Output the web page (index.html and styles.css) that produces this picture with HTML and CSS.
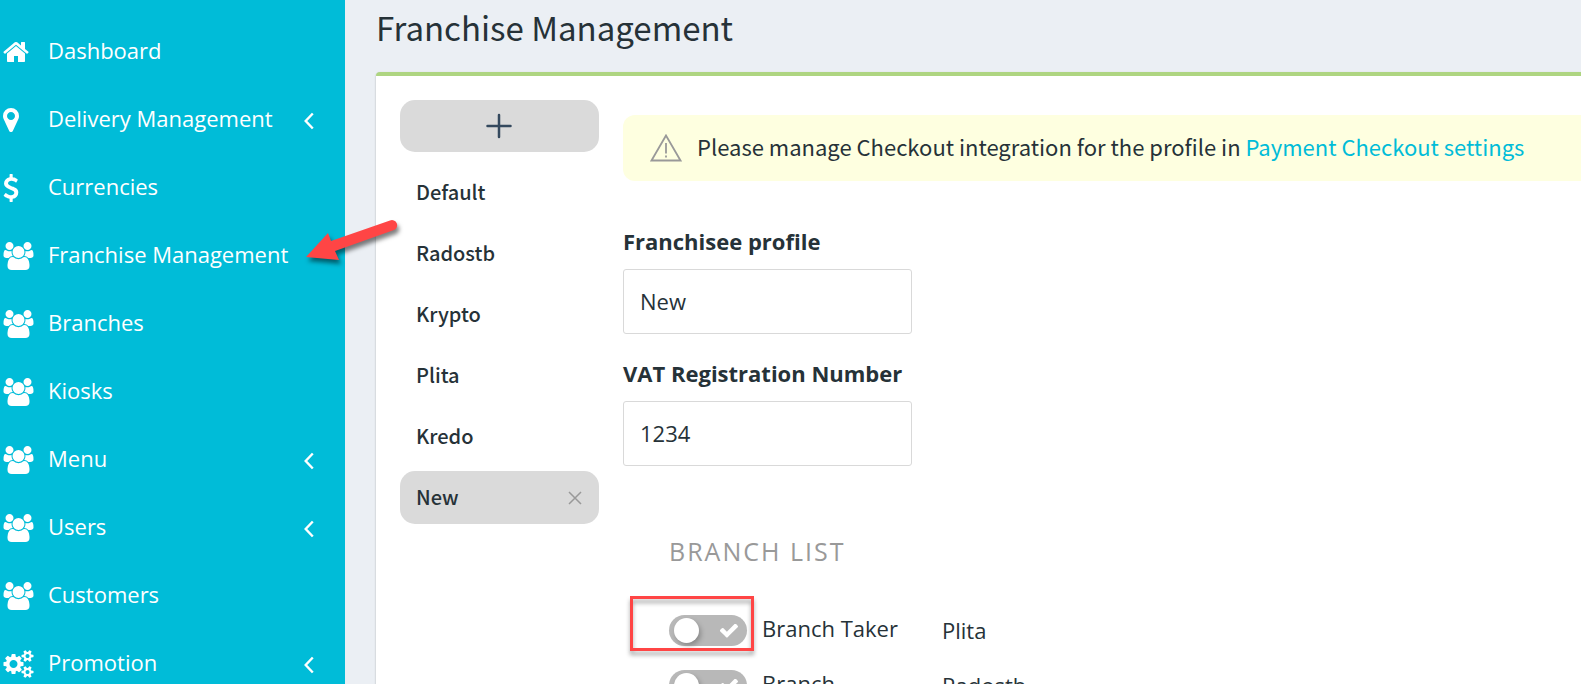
FILE: index.html
```html
<!DOCTYPE html>
<html lang="en">
<head>
    <meta charset="UTF-8">
    <meta name="viewport" content="width=device-width, initial-scale=1.0">
    <title>Franchise Management</title>
    <link rel="stylesheet" href="styles.css">
</head>
<body>
    <!-- shared icons -->
    <svg class="sprite" aria-hidden="true">
        <symbol id="home" viewBox="64 0 1664 1792" preserveAspectRatio="xMinYMid"><path d="M1472 992v480q0 26-19 45t-45 19h-384v-384h-256v384h-384q-26 0-45-19t-19-45v-480q0-1 .5-3t.5-3l575-474 575 474q1 2 1 6zm223-69l-62 74q-8 9-21 11h-3q-13 0-21-7l-692-577-692 577q-12 8-24 7-13-2-21-11l-62-74q-8-10-7-23.5t11-21.5l719-599q32-26 76-26t76 26l244 204v-195q0-14 9-23t23-9h192q14 0 23 9t9 23v408l219 182q10 8 11 21.5t-7 23.5z"/></symbol>
        <symbol id="marker" viewBox="384 0 1024 1792" preserveAspectRatio="xMinYMid"><path d="M1152 640q0-106-75-181t-181-75-181 75-75 181 75 181 181 75 181-75 75-181zm256 0q0 109-33 179l-364 774q-16 33-47.5 52t-67.5 19-67.5-19-46.5-52l-365-774q-33-70-33-179 0-212 150-362t362-150 362 150 150 362z"/></symbol>
        <symbol id="dollar" viewBox="384 0 1024 1792" preserveAspectRatio="xMinYMid"><path d="M1362 1185q0 153-99.5 263.5t-258.5 136.5v175q0 14-9 23t-23 9h-135q-13 0-22.5-9.5t-9.5-22.5v-175q-66-9-127.5-31t-101.5-44.5-74-48-46.5-37.5-17.5-18q-17-21-2-41l103-135q7-10 23-12 15-2 24 9l2 2q113 99 243 125 37 8 74 8 81 0 142.5-43t61.5-122q0-28-15-53t-33.5-42-58.5-37.5-66-32-80-32.5q-39-16-61.5-25t-61.5-26.5-62.5-31-56.5-35.5-53.5-42.5-43.5-49-35.5-58-21-66.5-8.5-78q0-138 98-242t255-134v-180q0-13 9.5-22.5t22.5-9.5h135q14 0 23 9t9 23v176q57 6 110.5 23t87 33.5 63.5 37.5 39 29 15 14q17 18 5 38l-81 146q-8 15-23 16-14 3-27-7-3-3-14.5-12t-39-26.5-58.5-32-74.5-26-85.5-11.5q-95 0-155 43t-60 111q0 26 8.5 48t29.5 41.5 39.5 33 56 31 60.5 27 70 27.5q53 20 81 31.5t76 35 75.5 42.5 62 50 53 63.5 31.5 76.5 13 94z"/></symbol>
        <symbol id="users" viewBox="0 0 1920 1792"><path d="M593 896q-162 5-265 128h-134q-82 0-138-40.5t-56-118.5q0-353 124-353 6 0 43.5 21t97.5 42.5 119 21.5q67 0 133-23-5 37-5 66 0 139 81 256zm1071 637q0 120-73 189.5t-194 69.5h-874q-121 0-194-69.5t-73-189.5q0-53 3.5-103.5t14-109 26.5-108.5 43-97.5 62-81 85.5-53.5 111.5-20q10 0 43 21.5t73 48 107 48 135 21.5 135-21.5 107-48 73-48 43-21.5q61 0 111.5 20t85.5 53.5 62 81 43 97.5 26.5 108.5 14 109 3.5 103.5zm-1024-1277q0 106-75 181t-181 75-181-75-75-181 75-181 181-75 181 75 75 181zm704 384q0 159-112.5 271.5t-271.5 112.5-271.5-112.5-112.5-271.5 112.5-271.5 271.5-112.5 271.5 112.5 112.5 271.5zm576 225q0 78-56 118.5t-138 40.5h-134q-103-123-265-128 81-117 81-256 0-29-5-66 66 23 133 23 59 0 119-21.5t97.5-42.5 43.5-21q124 0 124 353zm-128-609q0 106-75 181t-181 75-181-75-75-181 75-181 181-75 181 75 75 181z"/></symbol>
        <symbol id="cogs" viewBox="0 0 1920 1792"><path d="M896 896q0-106-75-181t-181-75-181 75-75 181 75 181 181 75 181-75 75-181zm768 512q0-52-38-90t-90-38-90 38-38 90q0 53 37.5 90.5t90.5 37.5 90.5-37.5 37.5-90.5zm0-1024q0-52-38-90t-90-38-90 38-38 90q0 53 37.5 90.5t90.5 37.5 90.5-37.5 37.5-90.5zm-384 421v185q0 10-7 19.5t-16 10.5l-155 24q-11 35-32 76 34 48 90 115 7 11 7 20 0 12-7 19-23 30-82.5 89.5t-78.5 59.5q-11 0-21-7l-115-90q-37 19-77 31-11 108-23 155-7 24-30 24h-186q-11 0-20-7.5t-10-17.5l-23-153q-34-10-75-31l-118 89q-7 7-20 7-11 0-21-8-144-133-144-160 0-9 7-19 10-14 41-53t47-61q-23-44-35-82l-152-24q-10-1-17-9.5t-7-19.5v-185q0-10 7-19.5t16-10.5l155-24q11-35 32-76-34-48-90-115-7-11-7-20 0-12 7-20 22-30 82-89t79-59q11 0 21 7l115 90q34-18 77-32 11-108 23-154 7-24 30-24h186q11 0 20 7.5t10 17.5l23 153q34 10 75 31l118-89q8-7 20-7 11 0 21 8 144 133 144 160 0 8-7 19-12 16-42 54t-45 60q23 48 34 82l152 23q10 2 17 10.5t7 19.5zm640 533v140q0 16-149 31-12 27-30 52 51 113 51 138 0 4-4 7-122 71-124 71-8 0-46-47t-52-68q-20 2-30 2t-30-2q-14 21-52 68t-46 47q-2 0-124-71-4-3-4-7 0-25 51-138-18-25-30-52-149-15-149-31v-140q0-16 149-31 13-29 30-52-51-113-51-138 0-4 4-7 4-2 35-20t59-34 30-16q8 0 46 46.5t52 67.5q20-2 30-2t30 2q51-71 92-112l6-2q4 0 124 70 4 3 4 7 0 25-51 138 17 23 30 52 149 15 149 31zm0-1024v140q0 16-149 31-12 27-30 52 51 113 51 138 0 4-4 7-122 71-124 71-8 0-46-47t-52-68q-20 2-30 2t-30-2q-14 21-52 68t-46 47q-2 0-124-71-4-3-4-7 0-25 51-138-18-25-30-52-149-15-149-31v-140q0-16 149-31 13-29 30-52-51-113-51-138 0-4 4-7 4-2 35-20t59-34 30-16q8 0 46 46.5t52 67.5q20-2 30-2t30 2q51-71 92-112l6-2q4 0 124 70 4 3 4 7 0 25-51 138 17 23 30 52 149 15 149 31z"/></symbol>
        <symbol id="angle" viewBox="0 0 10 18"><path d="M8.800 1.500L1.700 9l7.100 7.500" fill="none" stroke="currentColor" stroke-width="2.400"/></symbol>
        <symbol id="check" viewBox="121 366 1550 1188"><path d="M1671 566q0 40-28 68l-724 724-136 136q-28 28-68 28t-68-28l-136-136-362-362q-28-28-28-68t28-68l136-136q28-28 68-28t68 28l294 295 656-657q28-28 68-28t68 28l136 136q28 28 28 68z"/></symbol>
    </svg>

    <div class="layout">
        <nav class="sidebar">
            <a href="#" class="nav-item"><svg class="nav-icon"><use href="#home"/></svg><span>Dashboard</span></a>
            <a href="#" class="nav-item"><svg class="nav-icon"><use href="#marker"/></svg><span>Delivery Management</span><svg class="nav-angle"><use href="#angle"/></svg></a>
            <a href="#" class="nav-item"><svg class="nav-icon"><use href="#dollar"/></svg><span>Currencies</span></a>
            <a href="#" class="nav-item"><svg class="nav-icon"><use href="#users"/></svg><span>Franchise Management</span></a>
            <a href="#" class="nav-item"><svg class="nav-icon"><use href="#users"/></svg><span>Branches</span></a>
            <a href="#" class="nav-item"><svg class="nav-icon"><use href="#users"/></svg><span>Kiosks</span></a>
            <a href="#" class="nav-item"><svg class="nav-icon"><use href="#users"/></svg><span>Menu</span><svg class="nav-angle"><use href="#angle"/></svg></a>
            <a href="#" class="nav-item"><svg class="nav-icon"><use href="#users"/></svg><span>Users</span><svg class="nav-angle"><use href="#angle"/></svg></a>
            <a href="#" class="nav-item"><svg class="nav-icon"><use href="#users"/></svg><span>Customers</span></a>
            <a href="#" class="nav-item"><svg class="nav-icon"><use href="#cogs"/></svg><span>Promotion</span><svg class="nav-angle"><use href="#angle"/></svg></a>
        </nav>

        <main class="main">
            <h1>Franchise Management</h1>

            <div class="panel">
                <div class="profiles">
                    <button type="button" class="add-button" aria-label="Add profile">
                        <svg width="26" height="26" viewBox="0 0 26 26"><path d="M13 2v22M1.500 13h23" stroke="#34495e" stroke-width="2.500" stroke-linecap="round"/></svg>
                    </button>
                    <button type="button" class="profile">Default</button>
                    <button type="button" class="profile">Radostb</button>
                    <button type="button" class="profile">Krypto</button>
                    <button type="button" class="profile">Plita</button>
                    <button type="button" class="profile">Kredo</button>
                    <button type="button" class="profile active">New
                        <svg width="14" height="14" viewBox="0 0 14 14"><path d="M1 1l12 12M13 1L1 13" stroke="#999" stroke-width="1.500"/></svg>
                    </button>
                </div>

                <div class="content">
                    <div class="notice">
                        <svg width="32" height="28" viewBox="0 0 32 28"><path d="M16 1.500L1.500 26.500h29z" fill="none" stroke="#999" stroke-width="1.800"/><path d="M16 9v10.500M16 21.500v2" stroke="#999" stroke-width="1.800"/></svg>
                        <span>Please manage Checkout integration for the profile in <a href="#">Payment Checkout settings</a></span>
                    </div>

                    <form>
                        <div class="form-group">
                            <label for="profile">Franchisee profile</label>
                            <input type="text" id="profile" value="New">
                        </div>
                        <div class="form-group">
                            <label for="vat">VAT Registration Number</label>
                            <input type="text" id="vat" value="1234">
                        </div>

                        <div class="branches">
                            <h2>BRANCH LIST</h2>
                            <div class="branch">
                                <div class="switch">
                                    <input type="checkbox" id="branch1">
                                    <svg><use href="#check"/></svg>
                                    <div class="highlight"></div>
                                </div>
                                <label for="branch1">Branch Taker</label>
                                <span class="owner">Plita</span>
                            </div>
                            <div class="branch">
                                <div class="switch">
                                    <input type="checkbox" id="branch2">
                                    <svg><use href="#check"/></svg>
                                </div>
                                <label for="branch2">Branch</label>
                                <span class="owner">Radostb</span>
                            </div>
                        </div>
                    </form>
                </div>
            </div>
        </main>

        <svg class="arrow" width="110" height="64" viewBox="0 0 110 64">
            <path d="M6 47L28 23l3 8L90 10.500a5 5 0 0 1 4 9.500L35 41l4 9z" fill="#ff4545"/>
        </svg>
    </div>
</body>
</html>
```
FILE: styles.css
```css
* {
    box-sizing: border-box;
}

body {
    margin: 0;
    font-family: "Open Sans", sans-serif;
    font-size: 22px;
    color: #263238;
    background-color: #ebeff4;
}

.sprite {
    display: none;
}

.layout {
    position: relative;
    display: flex;
    height: 100vh;
    overflow: hidden;
}

/* sidebar */
.sidebar {
    flex: 0 0 345px;
    padding: 16px 31px 0 3px;
    background-color: #00bcd8;
}

.nav-item {
    display: flex;
    align-items: center;
    height: 68px;
    color: white;
    text-decoration: none;
}

.nav-item span {
    padding-bottom: 1px;
}

.nav-icon {
    width: 31px;
    height: 28px;
    margin: 3px 14px 0 0;
    fill: white;
}

.nav-angle {
    width: 10px;
    height: 18px;
    margin: 5px 0 0 auto;
}

/* page */
.main {
    flex: 1;
    min-width: 0;
    padding-left: 31px;
}

h1 {
    margin: 0;
    height: 72px;
    font-family: "Noto Sans CJK SC", sans-serif;
    font-size: 33px;
    font-weight: 400;
    line-height: 54px;
}

.panel {
    display: flex;
    gap: 24px;
    min-height: 100%;
    padding: 24px 0 24px 24px;
    background-color: white;
    border-top: 4px solid #aed581;
    border-radius: 4px 0 0 0;
    box-shadow: 0 1px 2px rgba(0, 0, 0, 0.3);
}

.profiles {
    flex: 0 0 199px;
}

.add-button,
.profile {
    display: flex;
    align-items: center;
    width: 100%;
    height: 53px;
    margin-bottom: 8px;
    padding: 0 17px 2px 16px;
    border: none;
    border-radius: 15px;
    background-color: white;
    color: #263238;
    font-family: "Noto Sans CJK SC", sans-serif;
    font-size: 20px;
    font-weight: 500;
    cursor: pointer;
}

.add-button {
    justify-content: center;
    height: 52px;
    margin-bottom: 14px;
    padding-bottom: 0;
    background-color: #dadada;
}

.profile.active {
    justify-content: space-between;
    background-color: #dadada;
}

.profile.active svg {
    margin-top: 2px;
}

.content {
    flex: 1;
    min-width: 0;
    padding-top: 15px;
}

.notice {
    display: flex;
    align-items: center;
    gap: 15px;
    height: 66px;
    margin-bottom: 44px;
    padding-left: 27px;
    background-color: #feffe0;
    border-radius: 12px 0 0 12px;
    font-family: "Noto Sans CJK SC", sans-serif;
    white-space: nowrap;
}

.notice span {
    padding-bottom: 4px;
}

.notice a {
    color: #00bcd8;
    text-decoration: none;
}

.form-group {
    width: 289px;
    margin-bottom: 23px;
}

.form-group label {
    display: block;
    margin-bottom: 12px;
    font-weight: bold;
    line-height: 32px;
    white-space: nowrap;
}

.form-group input {
    width: 100%;
    height: 65px;
    padding: 0 16px 2px;
    border: 1px solid #d9d9d9;
    border-radius: 3px;
    color: #263238;
    font-family: "Open Sans", sans-serif;
    font-size: 22px;
}

/* branches */
.branches {
    padding: 44px 0 0 46px;
}

h2 {
    margin: 0 0 34px;
    color: #999;
    font-size: 25px;
    font-weight: 400;
    letter-spacing: 2px;
    line-height: 36px;
}

.branch {
    display: flex;
    align-items: center;
    height: 55px;
}

.branch label {
    width: 195px;
    padding: 0 0 6px 15px;
}

.owner {
    padding-bottom: 2px;
}

.switch {
    position: relative;
    height: 31px;
}

.switch input {
    appearance: none;
    width: 78px;
    height: 31px;
    margin: 0;
    padding: 3px 5px;
    border-radius: 16px;
    background-color: #b8b8b8;
}

.switch input::before {
    content: "";
    display: block;
    width: 25px;
    height: 25px;
    border-radius: 50%;
    background-color: white;
    box-shadow: 2px 3px 5px rgba(0, 0, 0, 0.25);
}

.switch svg {
    position: absolute;
    top: 9px;
    right: 9px;
    width: 18px;
    height: 14px;
    fill: white;
}

/* annotations */
.highlight {
    position: absolute;
    top: -19px;
    left: -39px;
    width: 124px;
    height: 55px;
    border: 3px solid #ff4545;
    filter: drop-shadow(0 4px 2px rgba(0, 0, 0, 0.35));
    pointer-events: none;
}

.arrow {
    position: absolute;
    top: 210px;
    left: 300px;
    filter: drop-shadow(2px 4px 2px rgba(0, 0, 0, 0.5));
    pointer-events: none;
}
```
